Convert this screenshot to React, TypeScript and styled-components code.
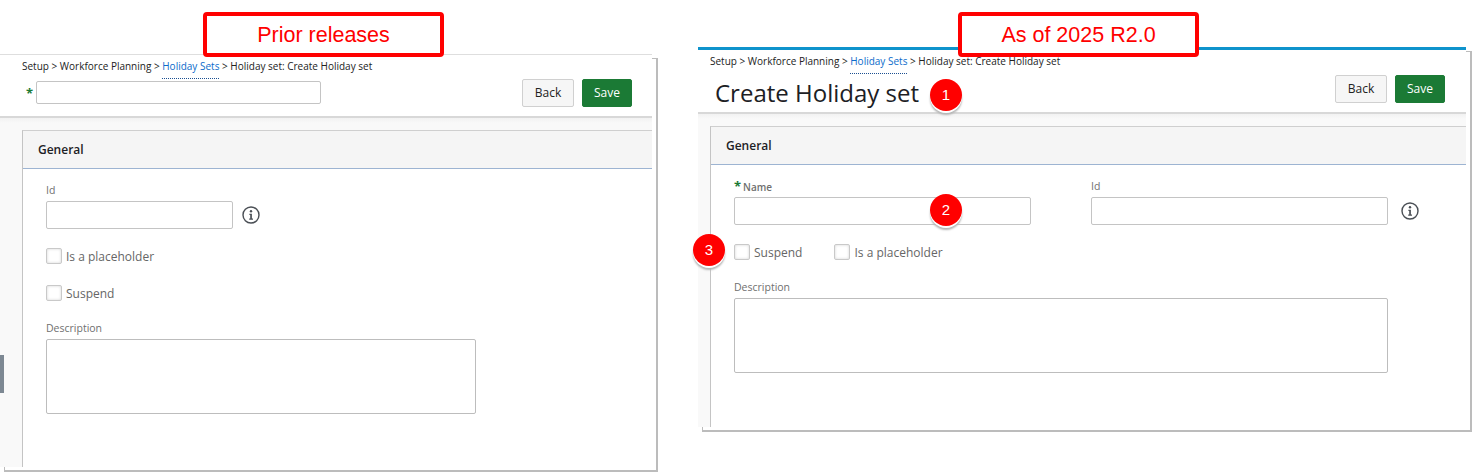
import styled, { createGlobalStyle } from "styled-components";

const GlobalStyle = createGlobalStyle`
  html, body {
    margin: 0;
    height: 472px;
    overflow: hidden;
    background: #fff;
    font-family: "Open Sans", "Liberation Sans", sans-serif;
  }
  * { box-sizing: border-box; }
`;

const Page = styled.div`
  display: flex;
  align-items: flex-start;
  width: 1483px;
  height: 472px;
  isolation: isolate;
`;

const Shot = styled.section<{ $top: number; $left: number; $width: number; $height: number }>`
  position: relative;
  flex: none;
  margin-top: ${(p) => p.$top}px;
  margin-left: ${(p) => p.$left}px;
  width: ${(p) => p.$width}px;
  height: ${(p) => p.$height}px;
  background: #f9f9f9;
  display: flex;
  flex-direction: column;

  /* offset frame the screenshot tool leaves behind the capture */
  &::after {
    content: "";
    position: absolute;
    z-index: -1;
    left: 4px;
    top: 4px;
    right: -6px;
    bottom: -5px;
    border-right: 2px solid #bcbcbc;
    border-bottom: 2px solid #bcbcbc;
    border-top: 1px solid #bcbcbc;
    border-left: 1px solid #bcbcbc;
  }
`;

const Header = styled.header<{ $accent?: boolean; $height: number }>`
  flex: none;
  height: ${(p) => p.$height}px;
  background: #fff;
  border-top: ${(p) => (p.$accent ? "3px solid #0e93cc" : "1px solid #dedede")};
  border-bottom: 2px solid #d8d8d8;
  padding-top: 5px;
`;

const Breadcrumb = styled.nav<{ $indent: number }>`
  padding-left: ${(p) => p.$indent}px;
  height: 14px;
  font-size: 10px;
  line-height: 13px;
  color: #222;
  white-space: nowrap;
`;

const CrumbLink = styled.a`
  color: #0b6bcb;
  padding-bottom: 5px;
  border-bottom: 1px dotted #1b4f91;
`;

const HeaderRow = styled.div<{ $top: number; $right: number }>`
  display: flex;
  align-items: flex-start;
  justify-content: space-between;
  margin-top: ${(p) => p.$top}px;
  padding-right: ${(p) => p.$right}px;
`;

const TitleInputWrap = styled.div`
  display: flex;
  align-items: center;
  gap: 3px;
  margin: 2px 0 0 26px;
`;

const Star = styled.span`
  color: #1b7a35;
  font-size: 13px;
  font-weight: 700;
  line-height: 14px;
`;

const TitleInput = styled.input`
  width: 285px;
  height: 23px;
  border: 1px solid #c4c4c4;
  border-radius: 2px;
  background: #fff;
`;

const Title = styled.h1`
  margin: 4px 0 0 17px;
  font-size: 24px;
  font-weight: 400;
  line-height: 28px;
  color: #1c2024;
`;

const Actions = styled.div`
  display: flex;
  gap: 8px;
`;

const Button = styled.button<{ $primary?: boolean }>`
  height: 28px;
  width: ${(p) => (p.$primary ? 50 : 52)}px;
  padding: 0 0 2px;
  border: 1px solid ${(p) => (p.$primary ? "#1b7a35" : "#d0d0d0")};
  border-radius: 2px;
  background: ${(p) => (p.$primary ? "#1b7a35" : "#f6f6f6")};
  color: ${(p) => (p.$primary ? "#fff" : "#222")};
  font-family: inherit;
  font-size: 12px;
`;

const Content = styled.div<{ $gutter: number }>`
  flex: 1;
  min-height: 0;
  padding: 12px 0 0 ${(p) => p.$gutter}px;
  background: linear-gradient(#f2f2f2, #f9f9f9 5px);
`;

const Card = styled.div`
  height: 100%;
  background: #fff;
  border-top: 1px solid #cfcfcf;
  border-left: 1px solid #c4c4c4;
`;

const CardHeader = styled.h2`
  margin: 0;
  height: 38px;
  padding-left: 15px;
  background: #f5f5f5;
  border-bottom: 1px solid #9db4d2;
  font-size: 12px;
  font-weight: 600;
  line-height: 37px;
  color: #1d2125;
`;

const CardBody = styled.div`
  padding: 14px 0 0 23px;
`;

const FieldRow = styled.div`
  display: flex;
  gap: 60px;
`;

const Field = styled.div`
  display: flex;
  flex-direction: column;
  gap: 4px;
`;

const FieldLabel = styled.label<{ $strong?: boolean }>`
  height: 14px;
  font-size: ${(p) => (p.$strong ? 10 : 10.5)}px;
  line-height: 14px;
  font-weight: ${(p) => (p.$strong ? 600 : 400)};
  color: #6f6f6f;

  ${Star} {
    margin-right: 2px;
  }
`;

const InputLine = styled.div<{ $gap: number }>`
  display: flex;
  align-items: center;
  gap: ${(p) => p.$gap}px;
`;

const TextInput = styled.input<{ $width: number }>`
  width: ${(p) => p.$width}px;
  height: 28px;
  border: 1px solid #c4c4c4;
  border-radius: 2px;
  background: #fff;
`;

const TextArea = styled.textarea<{ $width: number }>`
  display: block;
  width: ${(p) => p.$width}px;
  height: 75px;
  border: 1px solid #bdbdbd;
  border-radius: 2px;
  background: #fff;
  resize: none;
`;

const Checks = styled.div<{ $column?: boolean }>`
  display: flex;
  flex-direction: ${(p) => (p.$column ? "column" : "row")};
  gap: ${(p) => (p.$column ? 21 : 32)}px;
  margin: 19px 0 20px;
`;

const Check = styled.label`
  display: flex;
  align-items: center;
  gap: 4px;
  height: 16px;
  font-size: 12px;
  color: #666;
`;

const CheckBox = styled.span`
  width: 16px;
  height: 16px;
  border: 1px solid #c9c9c9;
  border-radius: 2px;
  background: #fff;
  box-shadow: inset 0 0 3px #d4d4d4;
`;

const InfoIcon = styled.svg`
  flex: none;
  width: 18px;
  height: 18px;
`;

const ScrollHandle = styled.div`
  position: absolute;
  left: 0;
  top: 301px;
  width: 4px;
  height: 38px;
  background: #7d8893;
`;

const Callout = styled.div<{ $x: number; $y: number }>`
  position: absolute;
  left: ${(p) => p.$x}px;
  top: ${(p) => p.$y}px;
  width: 241px;
  height: 45px;
  border: 4px solid #f00;
  border-radius: 4px;
  background: #fff;
  color: #f00;
  font-family: "Liberation Sans", Arial, sans-serif;
  font-size: 21.5px;
  line-height: 38px;
  text-align: center;
`;

const Badge = styled.span<{ $x: number; $y: number }>`
  position: absolute;
  left: ${(p) => p.$x}px;
  top: ${(p) => p.$y}px;
  width: 32px;
  height: 32px;
  border-radius: 50%;
  background: #f00;
  color: #fff;
  font-family: "Liberation Sans", Arial, sans-serif;
  font-size: 15px;
  line-height: 32px;
  text-align: center;
  box-shadow: 0 2px 0 #fff, 0 4px 2px #b5b5b5;
`;

const Info = () => (
  <InfoIcon viewBox="0 0 18 18" fill="none">
    <circle cx="9" cy="9" r="8" stroke="#4a4f55" strokeWidth="1.4" />
    <circle cx="9" cy="5.2" r="1.2" fill="#4a4f55" />
    <path d="M7.4 7.7H9.9V12.6H11V13.8H7.2V12.6H8.2V8.9H7.4Z" fill="#4a4f55" />
  </InfoIcon>
);

const Crumbs = ({ indent }: { indent: number }) => (
  <Breadcrumb $indent={indent}>
    Setup &gt; Workforce Planning &gt; <CrumbLink>Holiday Sets</CrumbLink> &gt; Holiday set: Create Holiday set
  </Breadcrumb>
);

export default function App() {
  return (
    <Page>
      <GlobalStyle />

      <Shot $top={54} $left={0} $width={652} $height={413}>
        <Header $height={64}>
          <Crumbs indent={22} />
          <HeaderRow $top={5} $right={20}>
            <TitleInputWrap>
              <Star>*</Star>
              <TitleInput />
            </TitleInputWrap>
            <Actions>
              <Button>Back</Button>
              <Button $primary>Save</Button>
            </Actions>
          </HeaderRow>
        </Header>
        <Content $gutter={22}>
          <Card>
            <CardHeader>General</CardHeader>
            <CardBody>
              <Field>
                <FieldLabel>Id</FieldLabel>
                <InputLine $gap={9}>
                  <TextInput $width={187} />
                  <Info />
                </InputLine>
              </Field>
              <Checks $column>
                <Check>
                  <CheckBox />
                  Is a placeholder
                </Check>
                <Check>
                  <CheckBox />
                  Suspend
                </Check>
              </Checks>
              <Field>
                <FieldLabel>Description</FieldLabel>
                <TextArea $width={430} />
              </Field>
            </CardBody>
          </Card>
        </Content>
        <ScrollHandle />
        <Callout $x={203} $y={-42}>Prior releases</Callout>
      </Shot>

      <Shot $top={47} $left={46} $width={768} $height={380}>
        <Header $accent $height={67}>
          <Crumbs indent={12} />
          <HeaderRow $top={6} $right={21}>
            <Title>Create Holiday set</Title>
            <Actions>
              <Button>Back</Button>
              <Button $primary>Save</Button>
            </Actions>
          </HeaderRow>
        </Header>
        <Content $gutter={12}>
          <Card>
            <CardHeader>General</CardHeader>
            <CardBody>
              <FieldRow>
                <Field>
                  <FieldLabel $strong>
                    <Star>*</Star>
                    Name
                  </FieldLabel>
                  <TextInput $width={297} />
                </Field>
                <Field>
                  <FieldLabel>Id</FieldLabel>
                  <InputLine $gap={13}>
                    <TextInput $width={297} />
                    <Info />
                  </InputLine>
                </Field>
              </FieldRow>
              <Checks>
                <Check>
                  <CheckBox />
                  Suspend
                </Check>
                <Check>
                  <CheckBox />
                  Is a placeholder
                </Check>
              </Checks>
              <Field>
                <FieldLabel>Description</FieldLabel>
                <TextArea $width={654} />
              </Field>
            </CardBody>
          </Card>
        </Content>
        <Callout $x={260} $y={-35}>As of 2025 R2.0</Callout>
        <Badge $x={232} $y={32}>1</Badge>
        <Badge $x={232} $y={147}>2</Badge>
        <Badge $x={-5} $y={187}>3</Badge>
      </Shot>
    </Page>
  );
}
